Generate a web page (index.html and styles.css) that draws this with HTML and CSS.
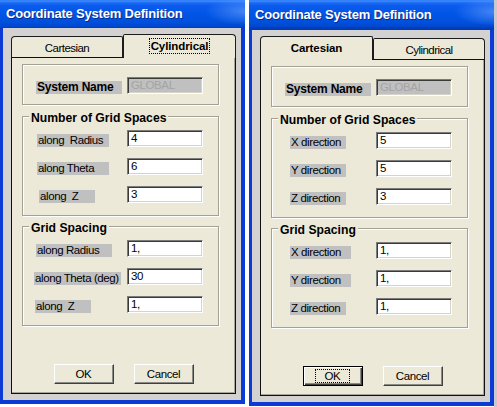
FILE: index.html
```html
<!DOCTYPE html>
<html>
<head>
<meta charset="utf-8">
<title>Coordinate System Definition</title>
<link rel="stylesheet" href="styles.css">
</head>
<body>
<div class="screen">
  <div class="dialog">
    <div class="titlebar"><span class="title">Coordinate System Definition</span></div>
    <div class="frame">
      <div class="tabs">
        <div class="tab">Cartesian</div>
        <div class="tab active"><span class="focus">Cylindrical</span></div>
      </div>
      <div class="panel">
        <div class="sysbox">
          <span class="lbl sys">System Name</span>
          <span class="input disabled">GLOBAL</span>
        </div>
        <div class="group">
          <div class="group-title">Number of Grid Spaces</div>
          <div class="row"><span class="lbl m15 w72">along&nbsp; Radius</span><span class="input">4</span></div>
          <div class="row"><span class="lbl m15 w72">along Theta</span><span class="input">6</span></div>
          <div class="row"><span class="lbl m17 w56">along&nbsp; Z</span><span class="input">3</span></div>
        </div>
        <div class="group">
          <div class="group-title">Grid Spacing</div>
          <div class="row"><span class="lbl m14 w76">along Radius</span><span class="input">1,</span></div>
          <div class="row"><span class="lbl m12 w87">along Theta (deg)</span><span class="input">30</span></div>
          <div class="row"><span class="lbl m13 w56">along&nbsp; Z</span><span class="input">1,</span></div>
        </div>
        <div class="buttons">
          <div class="btn">OK</div>
          <div class="btn">Cancel</div>
        </div>
      </div>
    </div>
  </div>

  <div class="dialog second">
    <div class="titlebar"><span class="title">Coordinate System Definition</span></div>
    <div class="frame">
      <div class="tabs">
        <div class="tab active first"><span class="plain">Cartesian</span></div>
        <div class="tab last">Cylindrical</div>
      </div>
      <div class="panel">
        <div class="sysbox">
          <span class="lbl sys">System Name</span>
          <span class="input disabled">GLOBAL</span>
        </div>
        <div class="group">
          <div class="group-title">Number of Grid Spaces</div>
          <div class="row"><span class="lbl m19 w56">X direction</span><span class="input">5</span></div>
          <div class="row"><span class="lbl m19 w56">Y direction</span><span class="input">5</span></div>
          <div class="row"><span class="lbl m19 w56">Z direction</span><span class="input">3</span></div>
        </div>
        <div class="group">
          <div class="group-title">Grid Spacing</div>
          <div class="row"><span class="lbl m19 w61">X direction</span><span class="input">1,</span></div>
          <div class="row"><span class="lbl m19 w61">Y direction</span><span class="input">1,</span></div>
          <div class="row"><span class="lbl m19 w56">Z direction</span><span class="input">1,</span></div>
        </div>
        <div class="buttons">
          <div class="btn default"><span class="focus">OK</span></div>
          <div class="btn">Cancel</div>
        </div>
      </div>
    </div>
  </div>
  <div class="edge"></div>
</div>
</body>
</html>
```

FILE: styles.css
```css
* { box-sizing: border-box; }

html, body {
  margin: 0;
  padding: 0;
  background: #ffffff;
}

body {
  width: 497px;
  height: 407px;
  overflow: hidden;
  font-family: "Liberation Sans", Arial, sans-serif;
  font-size: 11px;
  color: #000;
}

.screen {
  display: flex;
  align-items: flex-start;
}

.dialog {
  width: 245px;
  flex: none;
  display: flex;
  flex-direction: column;
}

.dialog.second {
  margin-left: 4px;
}

.edge {
  flex: 1;
  height: 407px;
  background: #c9c9cf;
}

.titlebar {
  height: 28px;
  padding-left: 6px;
  padding-bottom: 1px;
  display: flex;
  align-items: center;
  background:
    radial-gradient(ellipse 40px 14px at 100% 40%, rgba(120, 170, 255, 0.55), rgba(120, 170, 255, 0) 100%),
    linear-gradient(to bottom, #2a78f6 0, #3d8dff 1px, #1a68f2 3px, #0a5bec 6px, #0055e6 14px, #0050dd 22px, #0046cc 27px, #003cb8 28px);
}

.second .titlebar {
  height: 30px;
}

.title {
  color: #fff;
  font-weight: bold;
  font-size: 13px;
  letter-spacing: -0.2px;
  text-shadow: 1px 1px 0 #0a2a8a;
  white-space: nowrap;
}

.frame {
  border: solid #0b3ad4;
  border-width: 0 4px 4px 3px;
  background: #d4d2d0;
  padding: 6px 4px 6px 8px;
}

.tabs {
  display: flex;
  align-items: flex-end;
  height: 24px;
  margin-bottom: -1px;
  position: relative;
  z-index: 1;
}

.tab {
  width: 112px;
  height: 21px;
  margin-bottom: 1px;
  border: 1px solid #1c1c1c;
  border-bottom: none;
  border-radius: 4px 2px 0 0;
  background: #ece9d8;
  display: flex;
  justify-content: center;
  align-items: center;
  font-size: 11.5px;
  letter-spacing: -0.55px;
  padding-top: 1px;
}

.tab.active {
  width: 113px;
  height: 24px;
  margin-bottom: 0;
  border-radius: 2px 4px 0 0;
  font-weight: bold;
  font-size: 11.5px;
  letter-spacing: -0.1px;
  padding-top: 0;
  padding-bottom: 2px;
}

.tab.active.first {
  border-radius: 4px 2px 0 0;
}

.tab.last {
  border-radius: 2px 4px 0 0;
}

.focus {
  outline: 1px dotted #000;
  outline-offset: 0;
  padding: 1px 1px;
  line-height: 12px;
}

.plain {
  padding: 1px 1px;
  line-height: 12px;
}

.panel {
  width: 225px;
  height: 337px;
  border: 1px solid #101010;
  box-shadow: inset -1px -1px 0 #a8a69c;
  background: #ece9d8;
  padding: 6px 0 0 10px;
}

.sysbox,
.group {
  width: 197px;
  border: 1px solid #a3a197;
  box-shadow: inset 1px 1px 0 #ffffff, 1px 1px 0 #ffffff;
}

.sysbox {
  height: 41px;
  display: flex;
  align-items: flex-end;
  padding-bottom: 10px;
}

.group {
  margin-top: 11px;
  padding-bottom: 12px;
}

.group + .group {
  margin-top: 10px;
}

.group-title {
  width: fit-content;
  margin: -5px 0 0 6px;
  padding: 0 2px;
  background: #ece9d8;
  font-weight: bold;
  font-size: 12.2px;
  line-height: 13px;
  height: 13px;
}

.row {
  display: flex;
  align-items: flex-end;
  height: 17px;
  margin-top: 11px;
}

.group-title + .row {
  margin-top: 5px;
}

.lbl {
  display: block;
  height: 13px;
  line-height: 13px;
  background: #c0c0c0;
  padding-left: 1px;
  white-space: pre;
  font-size: 11.5px;
  letter-spacing: -0.4px;
}

.lbl.sys {
  width: 86px;
  margin-left: 13px;
  font-weight: bold;
  font-size: 12px;
  letter-spacing: -0.2px;
  padding-left: 1px;
}

.m12 { margin-left: 11px; }
.m13 { margin-left: 12px; }
.m14 { margin-left: 13px; }
.m15 { margin-left: 14px; }
.m17 { margin-left: 16px; }
.m19 { margin-left: 18px; }

.w56 { width: 56px; }
.w61 { width: 61px; }
.w72 { width: 72px; }
.w76 { width: 76px; }
.w87 { width: 87px; }

.input {
  display: block;
  width: 76px;
  height: 17px;
  margin-left: auto;
  margin-right: 15px;
  background: #ffffff;
  border: 1px solid;
  border-color: #7b7b7b #ffffff #ffffff #7b7b7b;
  box-shadow: inset 1px 1px 0 #3a3a3a, inset -1px -1px 0 #d6d3ca;
  padding-left: 3px;
  line-height: 15px;
  font-size: 11.5px;
  letter-spacing: -0.3px;
}

.input.disabled {
  background: #c0c0c0;
  color: #a4a4a4;
  letter-spacing: -0.4px;
}

.buttons {
  display: flex;
  justify-content: center;
  gap: 20px;
  margin-top: 38px;
  padding-right: 10px;
}

.btn {
  width: 60px;
  height: 20px;
  display: flex;
  align-items: center;
  justify-content: center;
  background: #ece9d8;
  border: 1px solid;
  border-color: #ffffff #404040 #404040 #ffffff;
  box-shadow: inset -1px -1px 0 #8a8a86;
  font-size: 11.5px;
  letter-spacing: -0.4px;
}

.btn.default {
  border: 1px solid #000;
  box-shadow: inset 1px 1px 0 #ffffff, inset -1px -1px 0 #404040, inset -2px -2px 0 #8a8a86;
}

.btn.default .focus {
  padding: 0 9px;
  line-height: 12px;
}
```
